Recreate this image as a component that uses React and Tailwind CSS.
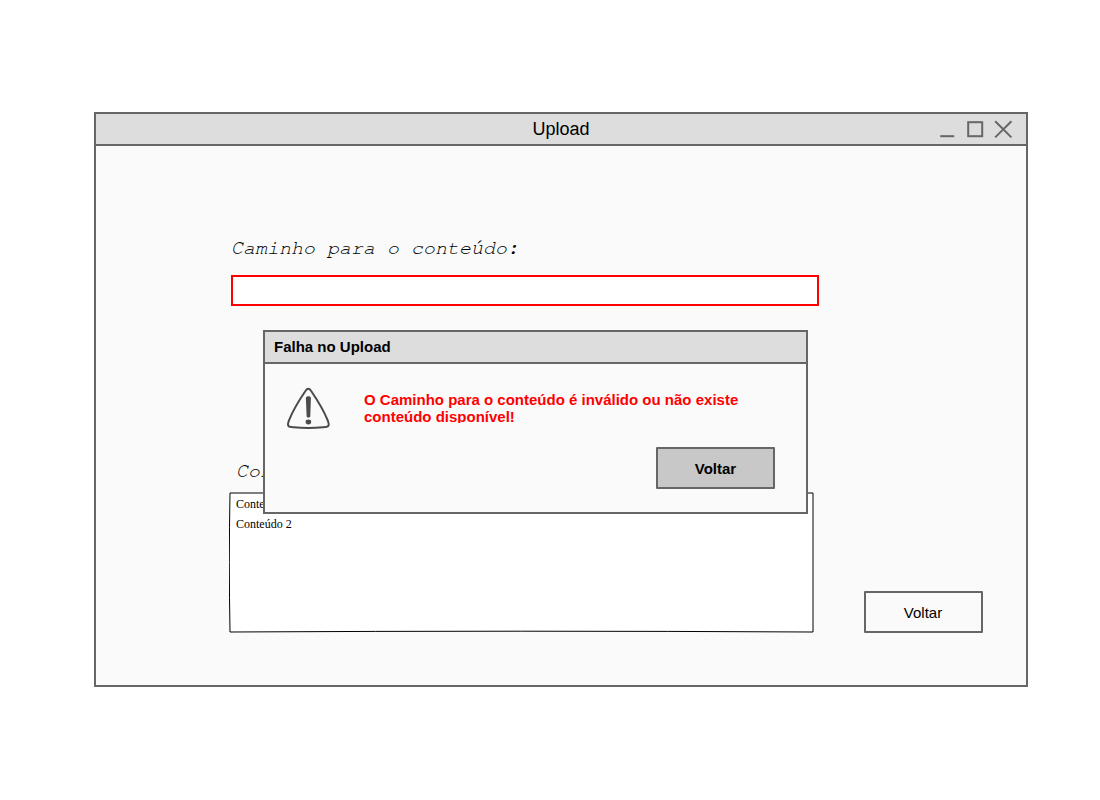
const sans = "font-['Liberation_Sans',Arial,sans-serif]";

function WindowControls() {
  return (
    <svg className="h-[31px] w-[90px]" viewBox="936 114 90 31" fill="none" stroke="#666" strokeWidth="2">
      <path d="M940.2 136.2H954.2" />
      <rect x="968.2" y="122.2" width="14" height="14" />
      <path d="M995.2 121.2L1011.4 137.4M1011.4 121.2L995.2 137.4" />
    </svg>
  );
}

function WarningIcon() {
  return (
    <svg className="h-[42px] w-[44px] shrink-0" viewBox="286 387 44 42">
      <path
        d="M308.3 388.8C309.4 388.8 310.3 389.7 311 390.8C317.4 400.2 323.6 410.2 327.7 420.3C328.5 422.3 329.3 424.6 328.3 425.8C327.4 426.9 325.2 427.1 323 427.3C313 428.2 303.5 428.2 293.6 427.3C291.4 427.1 289.2 426.9 288.4 425.8C287.5 424.6 288.2 422.3 289 420.3C293 410.2 299.2 400.2 305.6 390.8C306.3 389.7 307.2 388.8 308.3 388.8Z"
        fill="none"
        stroke="#4b4b4b"
        strokeWidth="2"
      />
      <path d="M305.9 398.2C305.9 395.6 310.9 395.6 310.9 398.2L310.3 416C310.2 418 306.7 418 306.6 416Z" fill="#4b4b4b" />
      <ellipse cx="308.4" cy="422" rx="2.8" ry="2.4" fill="#4b4b4b" />
    </svg>
  );
}

function ContentList() {
  return (
    <div className="relative -ml-[2px] h-[142px] w-[586px]">
      <svg className="absolute inset-0" width="586" height="142" viewBox="229 491 586 142">
        <path
          d="M230 493H813V632L667.25 631.4L521.5 631.2L375.75 631.4L230 632L229.5 597.25L229.3 562.5L229.5 527.75Z"
          fill="#fff"
          stroke="#000"
          strokeWidth="1"
        />
      </svg>
      <ul className="relative pt-[3px] pl-[7px] font-['Liberation_Serif','Times_New_Roman',serif] text-[12px] leading-[20px]">
        <li>Conteúdo 1</li>
        <li>Conteúdo 2</li>
      </ul>
    </div>
  );
}

function ErrorDialog() {
  return (
    <div className="absolute top-[184px] left-[167px] flex h-[184px] w-[545px] flex-col border-2 border-[#666] bg-[#fafafa]">
      <div className="flex h-[32px] shrink-0 items-center border-b-2 border-[#666] bg-[#ddd] pl-[9px] text-[15px] font-bold">
        Falha no Upload
      </div>
      <div className="flex pt-[23px] pl-[21px]">
        <WarningIcon />
        <p className="mt-[4px] ml-[34px] h-[32px] w-[400px] overflow-hidden text-[15px] leading-[17px] font-bold text-[#f00]">
          O Caminho para o conteúdo é inválido ou não existe conteúdo disponível!
        </p>
      </div>
      <button className="mt-[18px] mr-[31px] h-[42px] w-[119px] self-end rounded-[1px] border-2 border-[#666] bg-[#c8c8c8] pt-[2px] text-[15px] font-bold">
        Voltar
      </button>
    </div>
  );
}

const label =
  "font-['FreeMono','Nimbus_Mono_PS','Nimbus_Mono_L','TeX_Gyre_Cursor','Courier_10_Pitch','Courier_Prime','Liberation_Mono',monospace] text-[20px] leading-[24px] italic whitespace-pre";

export default function App() {
  return (
    <div className={`flex h-[800px] w-[1100px] bg-white pt-[112px] pl-[94px] text-black ${sans}`}>
      <div className="flex h-[575px] w-[934px] flex-col border-2 border-[#666] bg-[#fafafa]">
        <header className="grid h-[32px] shrink-0 grid-cols-[90px_1fr_90px] items-center border-b-2 border-[#666] bg-[#ddd]">
          <span />
          <h1 className="pb-[2px] text-center text-[18px] leading-[28px]">Upload</h1>
          <WindowControls />
        </header>
        <main className="relative flex flex-1 pl-[135px]">
          <div className="flex w-[588px] flex-col pt-[90px]">
            <label className={label}>Caminho para o conteúdo:</label>
            <input className="mt-[15px] h-[31px] w-[588px] border-2 border-[#f00] bg-white outline-none" />
            <h2 className={`mt-[153px] mb-[8px] pl-[5px] ${label}`}>Conteúdo:</h2>
            <ContentList />
          </div>
          <button className="mt-[445px] ml-[45px] h-[42px] w-[119px] shrink-0 rounded-[1px] border-2 border-[#666] bg-[#fafafa] pt-[2px] pr-px text-[15px]">
            Voltar
          </button>
          <ErrorDialog />
        </main>
      </div>
    </div>
  );
}
